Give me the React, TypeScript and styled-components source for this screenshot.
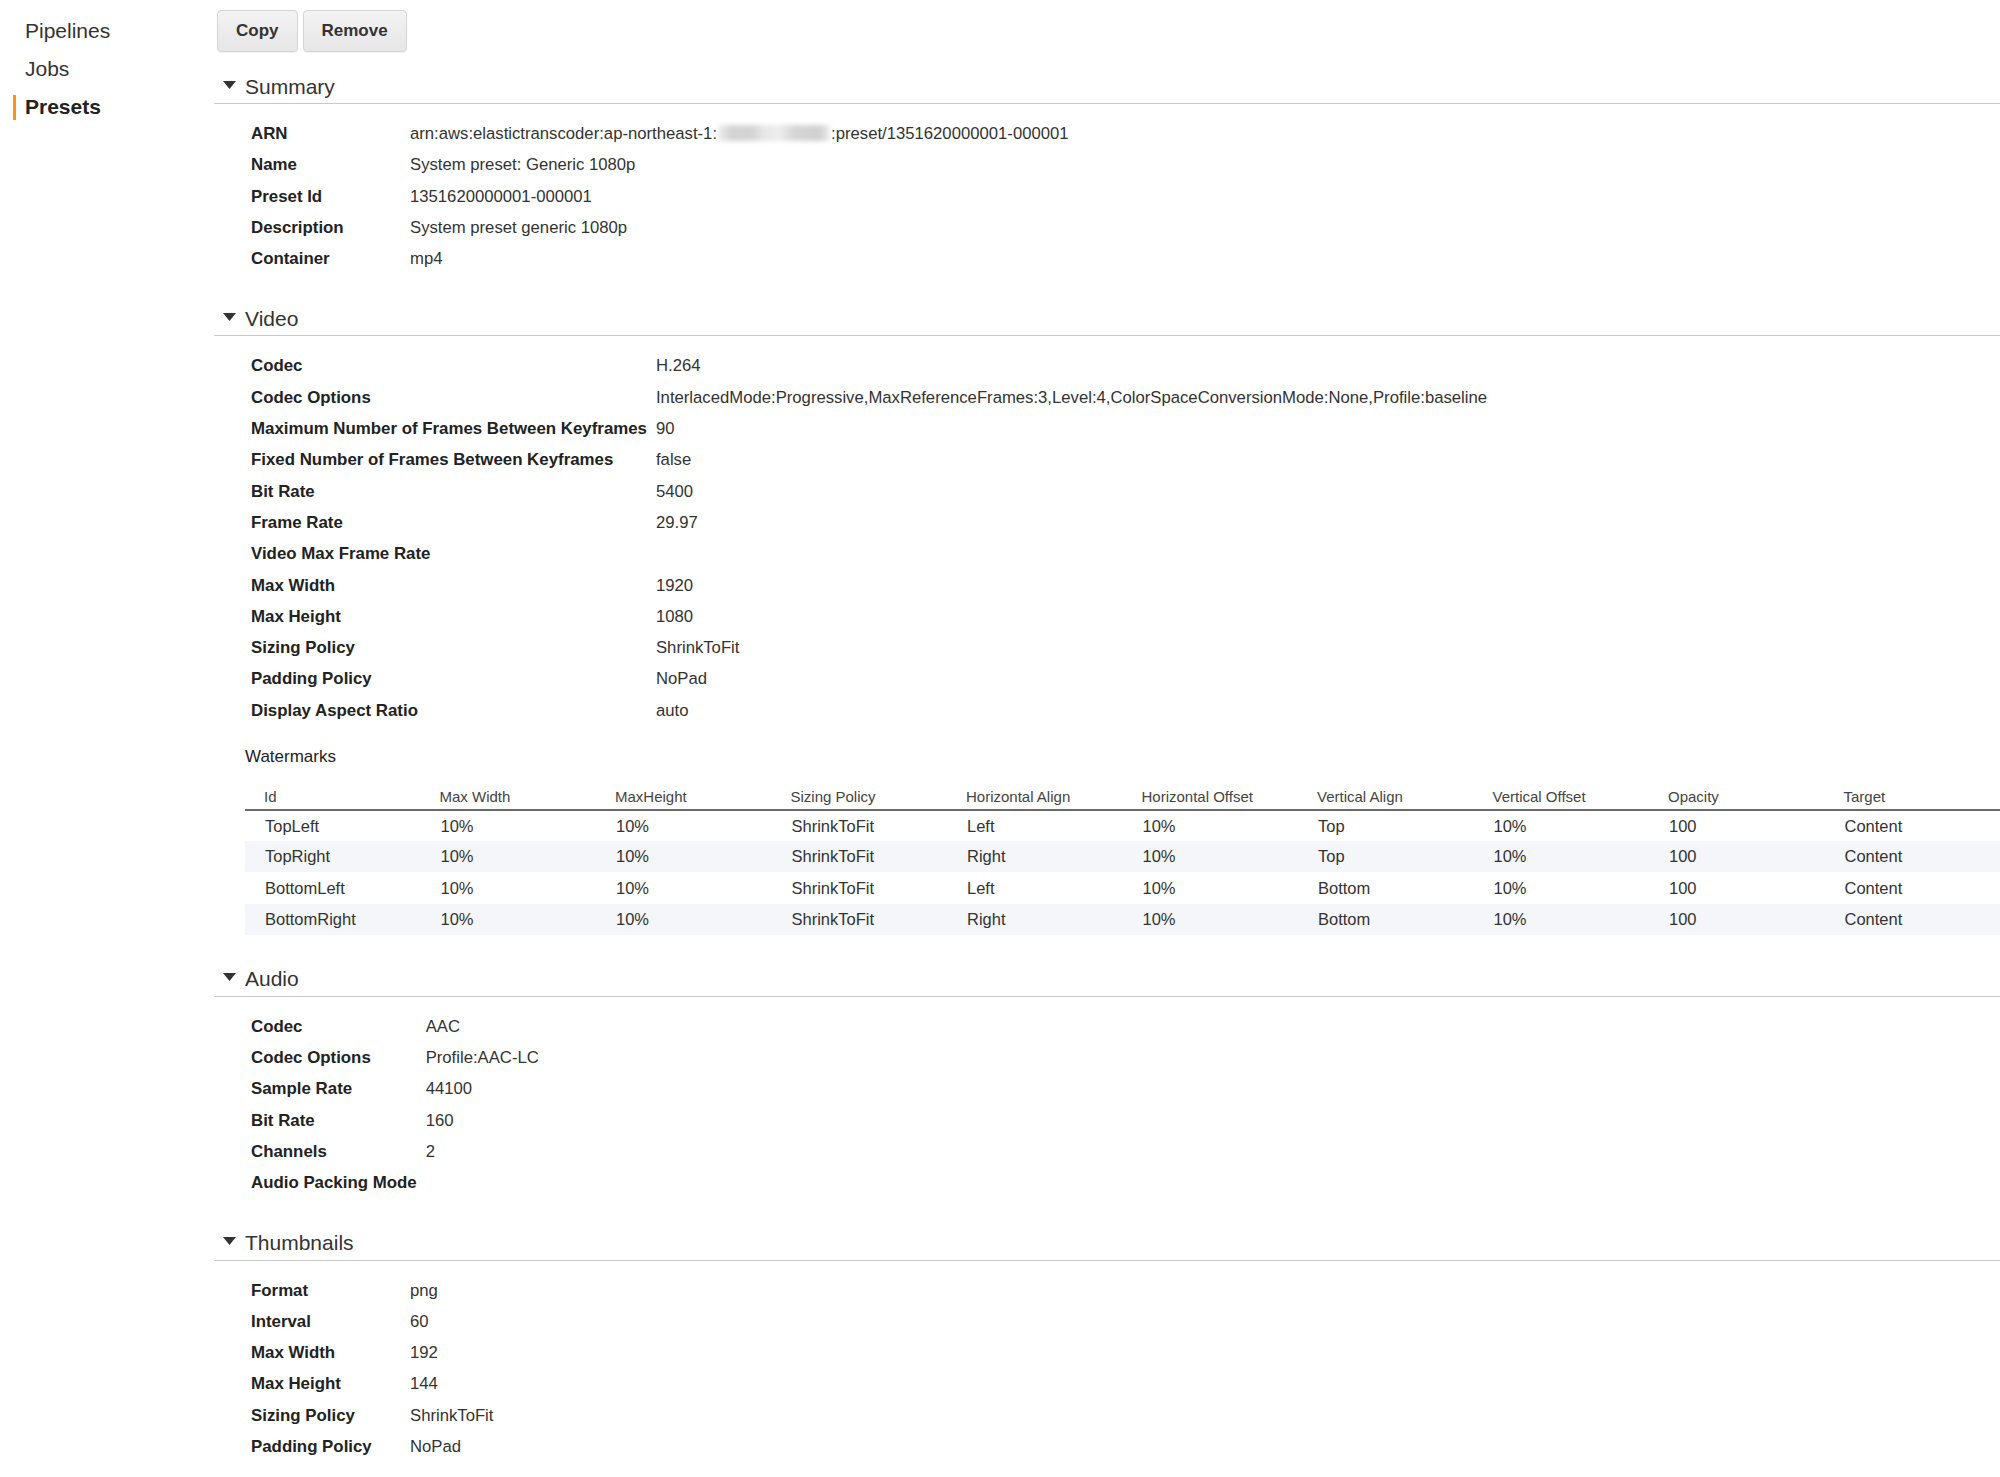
import React from "react";
import styled, { createGlobalStyle } from "styled-components";

const Global = createGlobalStyle`
  html, body { margin: 0; padding: 0; background: #ffffff; }
  body { font-family: "Liberation Sans", Arial, Helvetica, sans-serif; color: #333; }
  * { box-sizing: border-box; }
`;

const Page = styled.div`
  display: flex;
  width: 2000px;
  min-height: 1477px;
  background: #fff;
`;

const Sidebar = styled.nav`
  width: 214px;
  flex: none;
  padding-top: 12px;
  display: flex;
  flex-direction: column;
`;

const NavItem = styled.div<{ $active?: boolean }>`
  position: relative;
  height: 38px;
  line-height: 38px;
  padding-left: 25px;
  font-size: 21px;
  color: ${(p) => (p.$active ? "#222" : "#333")};
  font-weight: ${(p) => (p.$active ? 700 : 400)};
  &::before {
    content: "";
    display: ${(p) => (p.$active ? "block" : "none")};
    position: absolute;
    left: 13px;
    top: 7px;
    width: 3px;
    height: 25px;
    background: #f7931e;
  }
`;

const Main = styled.main`
  flex: 1;
  min-width: 0;
`;

const Toolbar = styled.div`
  display: flex;
  gap: 5px;
  padding: 10px 0 0 3px;
  height: 52px;
`;

const Button = styled.button`
  height: 42px;
  padding: 0 18px;
  border: 1px solid #d4d4d4;
  border-radius: 4px;
  background: linear-gradient(#f3f3f3, #e6e6e6);
  font-family: "Liberation Sans", Arial, sans-serif;
  font-weight: 700;
  font-size: 17px;
  color: #333;
  box-shadow: 0 1px 1px rgba(0, 0, 0, 0.06);
`;

const Section = styled.section<{ $first?: boolean }>`
  padding-top: ${(p) => (p.$first ? "18px" : "0")};
  padding-bottom: 28px;
`;

const SectionHeader = styled.div`
  display: flex;
  align-items: center;
  gap: 9px;
  height: 34px;
  padding-left: 9px;
  border-bottom: 1px solid #c9c9c9;
  font-size: 21px;
  color: #333;
`;

const Caret = styled.svg`
  width: 13px;
  height: 9px;
  flex: none;
  margin-top: -3px;
`;

const Body = styled.div`
  padding: 14px 0 0 37px;
`;

const KVGrid = styled.div`
  display: grid;
  grid-template-columns: minmax(150px, max-content) 1fr;
  column-gap: 9px;
`;

const Label = styled.div`
  height: 31.3px;
  line-height: 31.3px;
  font-size: 16.85px;
  font-weight: 700;
  color: #222;
  white-space: nowrap;
`;

const Value = styled.div`
  height: 31.3px;
  line-height: 31.3px;
  font-size: 16.7px;
  color: #333;
  white-space: nowrap;
`;

const Redacted = styled.span`
  display: inline-block;
  width: 112px;
  height: 16px;
  vertical-align: -2px;
  margin: 0 1px;
  background: linear-gradient(90deg, #eee 0%, #d4d4d4 12%, #d4d4d4 30%, #e8e8e8 42%, #eee 55%, #d6d6d6 68%, #d0d0d0 90%, #eee 100%);
  filter: blur(2px);
`;

const SubTitle = styled.div`
  margin: 19px 0 0 -6px;
  height: 24px;
  line-height: 24px;
  font-size: 17px;
  color: #222;
`;

const Table = styled.table`
  margin: 12px 0 0 -6px;
  width: calc(100% + 6px);
  border-collapse: collapse;
  table-layout: fixed;
  font-size: 16.5px;
`;

const Th = styled.th`
  text-align: left;
  font-weight: 400;
  font-size: 15px;
  color: #444;
  height: 29px;
  padding: 2px 0 0 19px;
  vertical-align: middle;
  border-bottom: 2px solid #6b6b6b;
`;

const Tr = styled.tr<{ $alt?: boolean }>`
  background: ${(p) => (p.$alt ? "#f4f6fa" : "#fff")};
`;

const Td = styled.td`
  height: 31.2px;
  padding: 0 0 0 20px;
  color: #333;
  white-space: nowrap;
`;

type KV = [string, React.ReactNode];

const Arrow = () => (
  <Caret viewBox="0 0 13 9">
    <path d="M0 0 L13 0 L6.5 8 Z" fill="#333" />
  </Caret>
);

const KVList = ({ items }: { items: KV[] }) => (
  <KVGrid>
    {items.map(([k, v]) => (
      <React.Fragment key={k}>
        <Label>{k}</Label>
        <Value>{v}</Value>
      </React.Fragment>
    ))}
  </KVGrid>
);

const summary: KV[] = [
  [
    "ARN",
    <>
      arn:aws:elastictranscoder:ap-northeast-1:<Redacted />:preset/1351620000001-000001
    </>,
  ],
  ["Name", "System preset: Generic 1080p"],
  ["Preset Id", "1351620000001-000001"],
  ["Description", "System preset generic 1080p"],
  ["Container", "mp4"],
];

const video: KV[] = [
  ["Codec", "H.264"],
  [
    "Codec Options",
    "InterlacedMode:Progressive,MaxReferenceFrames:3,Level:4,ColorSpaceConversionMode:None,Profile:baseline",
  ],
  ["Maximum Number of Frames Between Keyframes", "90"],
  ["Fixed Number of Frames Between Keyframes", "false"],
  ["Bit Rate", "5400"],
  ["Frame Rate", "29.97"],
  ["Video Max Frame Rate", ""],
  ["Max Width", "1920"],
  ["Max Height", "1080"],
  ["Sizing Policy", "ShrinkToFit"],
  ["Padding Policy", "NoPad"],
  ["Display Aspect Ratio", "auto"],
];

const audio: KV[] = [
  ["Codec", "AAC"],
  ["Codec Options", "Profile:AAC-LC"],
  ["Sample Rate", "44100"],
  ["Bit Rate", "160"],
  ["Channels", "2"],
  ["Audio Packing Mode", ""],
];

const thumbs: KV[] = [
  ["Format", "png"],
  ["Interval", "60"],
  ["Max Width", "192"],
  ["Max Height", "144"],
  ["Sizing Policy", "ShrinkToFit"],
  ["Padding Policy", "NoPad"],
];

const wmHeaders = [
  "Id",
  "Max Width",
  "MaxHeight",
  "Sizing Policy",
  "Horizontal Align",
  "Horizontal Offset",
  "Vertical Align",
  "Vertical Offset",
  "Opacity",
  "Target",
];

const wmRows = [
  ["TopLeft", "10%", "10%", "ShrinkToFit", "Left", "10%", "Top", "10%", "100", "Content"],
  ["TopRight", "10%", "10%", "ShrinkToFit", "Right", "10%", "Top", "10%", "100", "Content"],
  ["BottomLeft", "10%", "10%", "ShrinkToFit", "Left", "10%", "Bottom", "10%", "100", "Content"],
  ["BottomRight", "10%", "10%", "ShrinkToFit", "Right", "10%", "Bottom", "10%", "100", "Content"],
];

const SectionBlock = ({
  title,
  first,
  children,
}: {
  title: string;
  first?: boolean;
  children: React.ReactNode;
}) => (
  <Section $first={first}>
    <SectionHeader>
      <Arrow />
      {title}
    </SectionHeader>
    <Body>{children}</Body>
  </Section>
);

export default function App() {
  return (
    <>
      <Global />
      <Page>
        <Sidebar>
          <NavItem>Pipelines</NavItem>
          <NavItem>Jobs</NavItem>
          <NavItem $active>Presets</NavItem>
        </Sidebar>
        <Main>
          <Toolbar>
            <Button>Copy</Button>
            <Button>Remove</Button>
          </Toolbar>
          <SectionBlock title="Summary" first>
            <KVList items={summary} />
          </SectionBlock>
          <SectionBlock title="Video">
            <KVList items={video} />
            <SubTitle>Watermarks</SubTitle>
            <Table>
              <thead>
                <tr>
                  {wmHeaders.map((h) => (
                    <Th key={h}>{h}</Th>
                  ))}
                </tr>
              </thead>
              <tbody>
                {wmRows.map((r, i) => (
                  <Tr key={r[0]} $alt={i % 2 === 1}>
                    {r.map((c, j) => (
                      <Td key={j}>{c}</Td>
                    ))}
                  </Tr>
                ))}
              </tbody>
            </Table>
          </SectionBlock>
          <SectionBlock title="Audio">
            <KVList items={audio} />
          </SectionBlock>
          <SectionBlock title="Thumbnails">
            <KVList items={thumbs} />
          </SectionBlock>
        </Main>
      </Page>
    </>
  );
}
